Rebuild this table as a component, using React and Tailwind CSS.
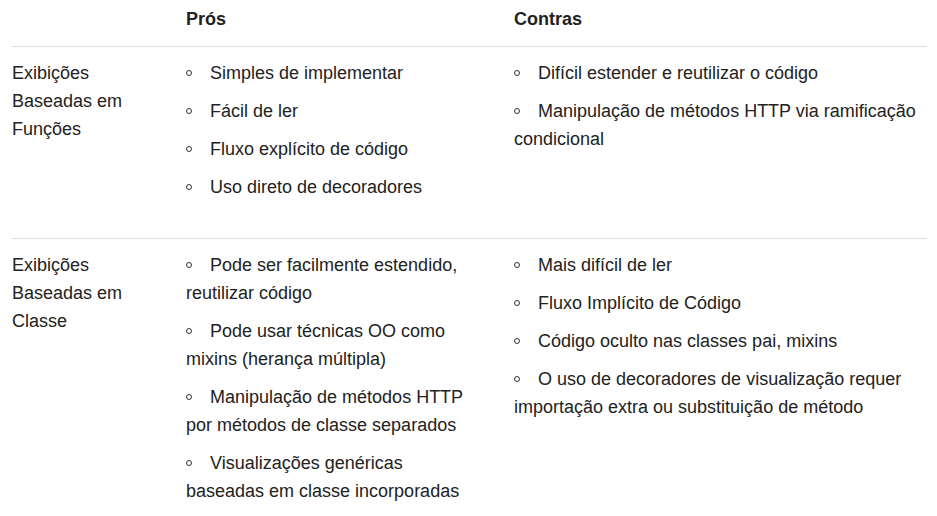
import React from 'react';

const rows = [
  {
    label: 'Exibições Baseadas em Funções',
    pros: [
      'Simples de implementar',
      'Fácil de ler',
      'Fluxo explícito de código',
      'Uso direto de decoradores',
    ],
    cons: [
      'Difícil estender e reutilizar o código',
      'Manipulação de métodos HTTP via ramificação condicional',
    ],
    pad: 'pt-[12px] pb-[37px]',
  },
  {
    label: 'Exibições Baseadas em Classe',
    pros: [
      'Pode ser facilmente estendido, reutilizar código',
      'Pode usar técnicas OO como mixins (herança múltipla)',
      'Manipulação de métodos HTTP por métodos de classe separados',
      'Visualizações genéricas baseadas em classe incorporadas',
    ],
    cons: [
      'Mais difícil de ler',
      'Fluxo Implícito de Código',
      'Código oculto nas classes pai, mixins',
      'O uso de decoradores de visualização requer importação extra ou substituição de método',
    ],
    pad: 'pt-[12px] pb-[20px]',
  },
];

function BulletList({ items }) {
  return (
    <ul className="flex flex-col gap-[10px]">
      {items.map((item, i) => (
        <li key={i}>
          <span className="inline-block w-[6px] h-[6px] rounded-full border border-[#333] align-middle relative top-[-1px] mr-[18px]" />
          {item}
        </li>
      ))}
    </ul>
  );
}

export default function App() {
  return (
    <div
      className="w-[937px] h-[516px] overflow-hidden bg-white text-[#222] text-[18px] leading-[28px] pl-[12px] pr-[10px]"
      style={{ fontFamily: '"Liberation Sans", Arial, sans-serif' }}
    >
      {/* header */}
      <div className="grid grid-cols-[174px_328px_413px] pt-[5px] pb-[13px] font-bold">
        <div />
        <div>Prós</div>
        <div>Contras</div>
      </div>

      {rows.map((row, i) => (
        <div
          key={i}
          className={`grid grid-cols-[174px_328px_413px] border-t border-[#dddddd] ${row.pad}`}
        >
          <div className="pr-[34px]">{row.label}</div>
          <div className="pr-[44px]">
            <BulletList items={row.pros} />
          </div>
          <div className="pr-[8px]">
            <BulletList items={row.cons} />
          </div>
        </div>
      ))}
    </div>
  );
}
